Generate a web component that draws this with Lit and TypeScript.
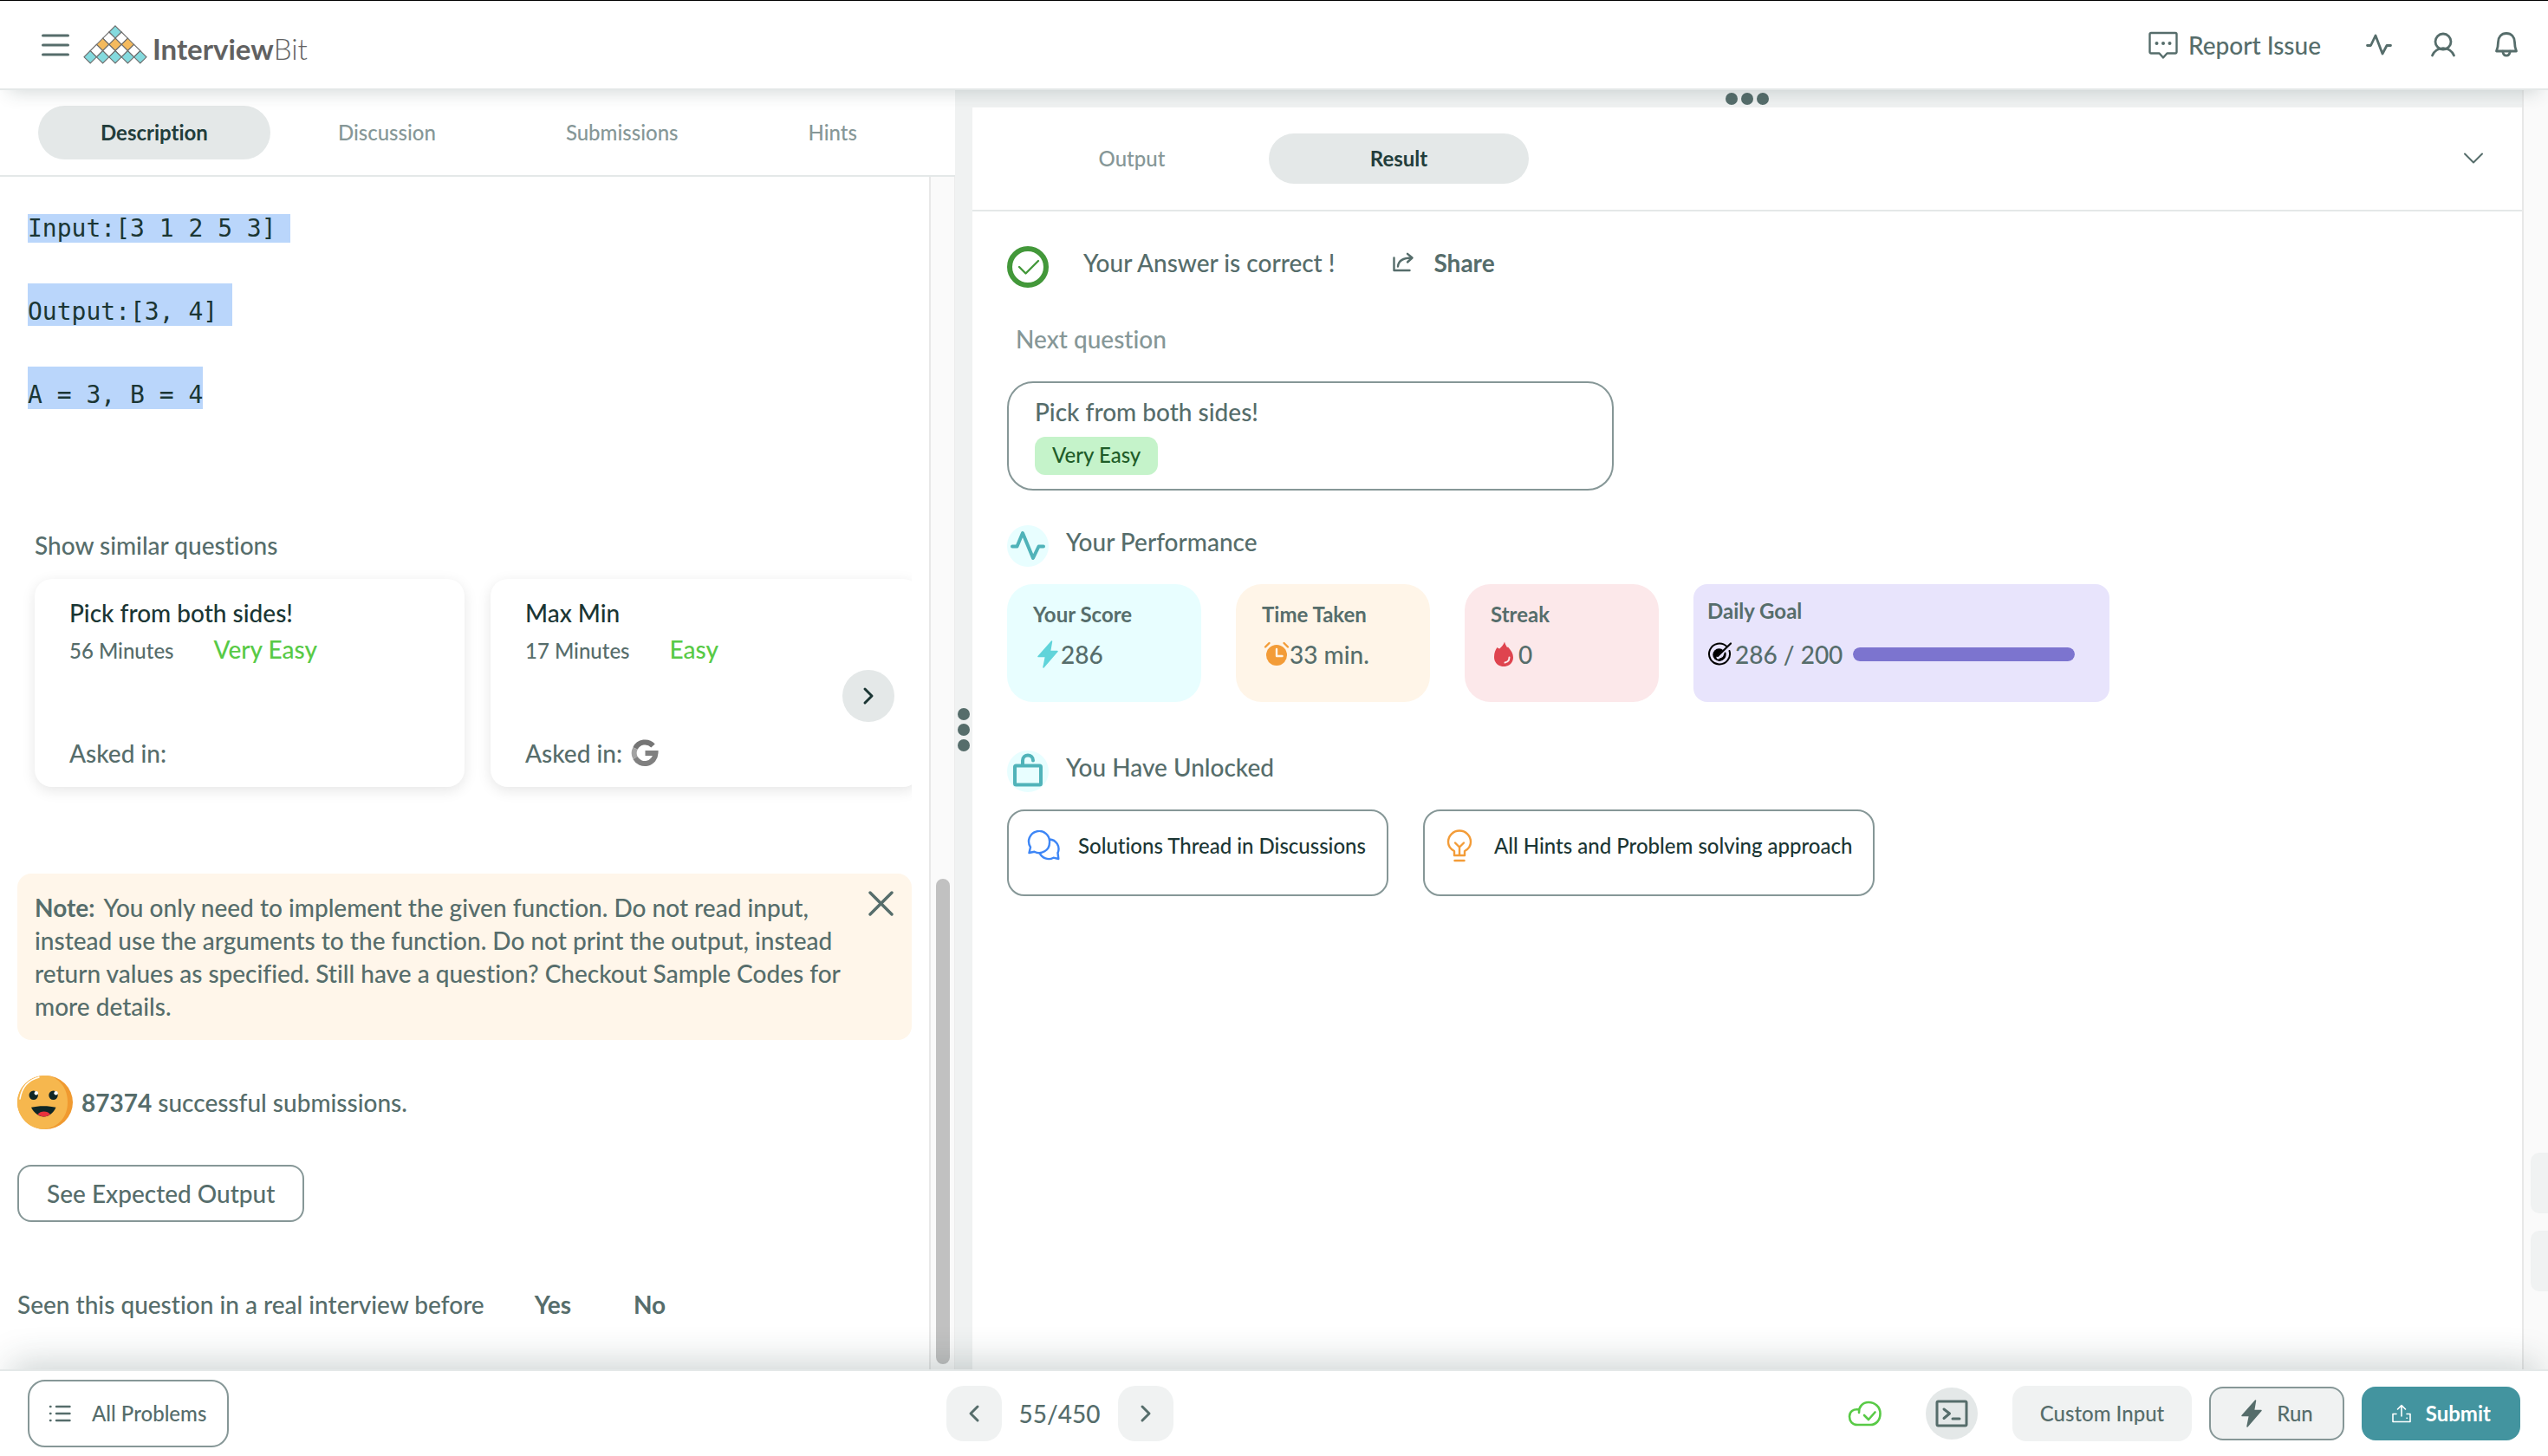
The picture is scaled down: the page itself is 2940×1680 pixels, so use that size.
import { LitElement, html, svg, css, nothing } from "lit";
import { customElement, property, state } from "lit/decorators.js";
import { classMap } from "lit/directives/class-map.js";
import { styleMap } from "lit/directives/style-map.js";

/* ---------- icons ---------- */

const line = (w: number, h: number, sw: number, body: unknown) => html`
  <svg width=${w} height=${h} viewBox="0 0 ${w} ${h}" fill="none" stroke="currentColor"
    stroke-width=${sw} stroke-linecap="round" stroke-linejoin="round" aria-hidden="true">${body}</svg>`;
const solid = (w: number, h: number, body: unknown) => html`
  <svg width=${w} height=${h} viewBox="0 0 ${w} ${h}" fill="currentColor" aria-hidden="true">${body}</svg>`;

const diamond = (cx: number, cy: number, fill: string) => svg`
  <path d="M${cx} ${cy - 7.2}l7.2 7.2-7.2 7.2-7.2-7.2z" fill=${fill} stroke="#6b6b6b" stroke-width="1.1" />`;

const logoRows = [
  { n: 1, fill: "#84dade" },
  { n: 2, fill: "#ffffff" },
  { n: 3, fill: "#f4ba5e" },
  { n: 4, fill: "#ffffff" },
  { n: 5, fill: "#84dade" },
];

const logoMark = html`
  <svg width="74" height="46" viewBox="0 0 74 46" aria-hidden="true">
    ${logoRows.map((row, r) =>
      Array.from({ length: row.n }, (_, i) =>
        diamond(37 + (i - (row.n - 1) / 2) * 14.4, 8 + r * 7.2, row.fill)))}
  </svg>`;

const icons = {
  menu: line(32, 28, 3, svg`<path d="M1.500 3h29M1.500 14h29M1.500 25h29" />`),
  report: line(34, 34, 2.400, svg`
    <path d="M3 3h28a1.500 1.500 0 0 1 1.500 1.500V25a1.500 1.500 0 0 1-1.500 1.500h-9.500L17 31.500l-4.500-5H3A1.500 1.500 0 0 1 1.500 25V4.500A1.500 1.500 0 0 1 3 3z" />
    <g fill="currentColor" stroke="none"><circle cx="9.500" cy="15" r="2" /><circle cx="17" cy="15" r="2" /><circle cx="24.500" cy="15" r="2" /></g>`),
  pulse: line(30, 28, 2.800, svg`<path d="M1.500 14.500h4L11 3l8 21 5-9.500h4.500" />`),
  user: line(30, 30, 2.800, svg`<circle cx="15" cy="11" r="9" /><path d="M2.500 27a13.500 13.500 0 0 1 25 0" />`),
  bell: line(28, 32, 2.800, svg`
    <path d="M14 2.500c-6 0-9.500 4.500-9.500 10 0 5-.8 7.500-2 10.500h23c-1.200-3-2-5.500-2-10.500 0-5.500-3.500-10-9.500-10z" />
    <path d="M9.800 23.200c.3 3.200 2 5 4.200 5s3.900-1.800 4.200-5" />`),
  chevronDown: line(24, 16, 2, svg`<path d="M2 2.500l10 10 10-10" />`),
  chevronRight: line(14, 22, 3, svg`<path d="M3 3l8 8-8 8" />`),
  chevronLeft: line(14, 22, 3, svg`<path d="M11 3l-8 8 8 8" />`),
  close: line(30, 30, 3.400, svg`<path d="M2 2l25 25M27 2L2 27" />`),
  share: line(26, 24, 2.400, svg`
    <path d="M2.500 6.500V21h18" /><path d="M7 16.500c.5-6 4.500-10 16-10" /><path d="M18 1.800l5.500 4.700-5.500 5" />`),
  check: html`
    <svg width="48" height="48" viewBox="0 0 48 48" fill="none" stroke="#43983a" stroke-linecap="round" stroke-linejoin="round" aria-hidden="true">
      <circle cx="24" cy="24" r="21" stroke-width="6" />
      <path d="M14 24l7.500 7.500L36 17" stroke-width="2.400" />
    </svg>`,
  perf: html`
    <svg width="48" height="48" viewBox="0 0 48 48" fill="none" stroke="#50b3b9" stroke-width="4" stroke-linecap="round" stroke-linejoin="round" aria-hidden="true">
      <circle cx="24" cy="24" r="24" fill="#e8feff" stroke="none" />
      <path d="M6 24.500h5.500L18 9l12 29 6.500-13.500H42" />
    </svg>`,
  unlock: html`
    <svg width="48" height="48" viewBox="0 0 48 48" fill="none" stroke="#50b3b9" stroke-width="4" stroke-linecap="round" stroke-linejoin="round" aria-hidden="true">
      <circle cx="24" cy="24" r="24" fill="#e8feff" stroke="none" />
      <rect x="9" y="17.500" width="30" height="22" rx="1.500" />
      <path d="M18 17v-5.500c0-8 12-8 12 0" />
    </svg>`,
  bolt: solid(26, 34, svg`<path d="M17.500 2L2 19.500h8.500L8 32l16-18.500h-8.500z" stroke="currentColor" stroke-width="1.500" stroke-linejoin="round" />`),
  clock: html`
    <svg width="30" height="30" viewBox="0 0 30 30" fill="none" stroke="#f39c38" stroke-linecap="round" stroke-linejoin="round" aria-hidden="true">
      <circle cx="15" cy="16" r="12" fill="#f39c38" stroke="none" />
      <path d="M2 6.500L6.500 2M28 6.500L23.500 2" stroke-width="2.400" />
      <path d="M15 9v8h6.500" stroke="#fff5e8" stroke-width="2.400" />
    </svg>`,
  flame: html`
    <svg width="26" height="30" viewBox="0 0 26 30" aria-hidden="true">
      <path d="M14 0.500c.5 2.500 2 4.500 3 6.500l1-.5c3.500 4 6 7.500 6 12C24 25 19 29 13 29S2 25 2 18c0-5 1.500-8 3.500-11 .8.600 1.800 1.500 2.800 1.500C10 7 13 4 14 .5z" fill="#df444f" />
      <path d="M19.500 18.500c0 3.500-2 5.500-5 6" fill="none" stroke="#fce8ea" stroke-width="2" stroke-linecap="round" />
    </svg>`,
  target: html`
    <svg width="28" height="28" viewBox="0 0 28 28" fill="none" stroke="#000" stroke-width="2" stroke-linecap="round" aria-hidden="true">
      <path d="M22.500 5a12 12 0 1 0 3 5" />
      <circle cx="13.500" cy="14.500" r="7.200" fill="#000" stroke="none" />
      <path d="M12.500 17.500L22 8" stroke="#e8e4fc" stroke-width="4" />
      <path d="M12 16L27 1.500" stroke-width="2.200" />
      <path d="M20.500 12.500c1 4.500-2.500 8.500-7 8.500" />
      <path d="M15 17.500c1.500 0 3-1.500 3-3" stroke="#e8e4fc" stroke-width="1.500" />
    </svg>`,
  chats: html`
    <svg width="40" height="36" viewBox="-1 0 40 36" fill="none" stroke="#3d86f6" stroke-width="2.400" stroke-linejoin="round" aria-hidden="true">
      <path d="M26 14a12 12 0 1 0-22 5.500L2.500 26l6-1.200A12 12 0 0 0 26 14z" />
      <path d="M26 10.500a11 11 0 0 1 9.500 15.500l.8 7-5.800-1.300A11.500 11.500 0 0 1 14.500 26" />
    </svg>`,
  bulb: html`
    <svg width="40" height="38" viewBox="-5 0 40 38" fill="none" stroke="#f39c38" stroke-width="2.400" stroke-linecap="round" stroke-linejoin="round" aria-hidden="true">
      <path d="M9 30v-5C4.500 22.500 2 19 2 14.500a13 13 0 0 1 26 0c0 4.500-2.500 8-7 10.500v5z" />
      <path d="M10 15.500l5 5 5-5M15 20.500V29M9.500 36h11" />
    </svg>`,
  list: line(26, 22, 2.400, svg`<path d="M9 3h15.500M9 11h15.500M9 19h15.500M2 3h.5M2 11h.5M2 19h.5" />`),
  cloud: line(40, 30, 2.600, svg`
    <path d="M13 14c-.5-6.500 4-12 11-12s13.500 5 13.500 13S32.500 28 26 28H11C5.500 28 2 24 2 18.500S6 9.500 13 10.500" />
    <path d="M19 17l5 5 7.500-8.500" />`),
  terminal: line(38, 32, 3, svg`
    <rect x="2" y="2" width="34" height="28" rx="1.500" />
    <path d="M10 11l6.500 5-6.500 5.500M20 22h8" />`),
  upload: line(24, 22, 1.600, svg`
    <path d="M12 14V2M7.500 6L12 1.500 16.500 6M6 11.500H2V20.500h20V11.500h-4M18 16.200h.4" />`),
  google: html`
    <svg width="32" height="32" viewBox="0 0 32 32" fill="none" stroke="#757575" stroke-width="6" aria-hidden="true">
      <path d="M25.500 7.500A12.500 12.500 0 0 0 5 10.500" />
      <path d="M5 10.500a12.500 12.500 0 0 0 0 11" stroke="#a3a3a3" />
      <path d="M5 21.500A12.500 12.500 0 0 0 28.500 16H16.500" stroke="#808080" />
    </svg>`,
  smile: html`
    <svg width="64" height="64" viewBox="0 0 64 64" aria-hidden="true">
      <ellipse cx="32" cy="32" rx="32" ry="31" fill="#f09a30" />
      <path d="M32 1C14 1 0 15 0 32s14 31 31 31c16-2 27-14 27-31S48 3 34 1z" fill="#f6b74e" />
      <path d="M3 28C5 15 13 6 25 3" fill="none" stroke="#fff" stroke-width="1.500" stroke-linecap="round" />
      <circle cx="18.700" cy="23.700" r="5.200" fill="#0f2626" />
      <circle cx="41.500" cy="23.700" r="5.200" fill="#0f2626" />
      <circle cx="21.800" cy="21.300" r="2.200" fill="#fff" />
      <circle cx="44.600" cy="21.300" r="2.200" fill="#fff" />
      <path d="M16 37.800c8-2.200 20.500-2.200 28.500 0C41.500 44.500 36.500 48.500 30.500 48.500S19.500 44.500 16 37.800z" fill="#0f2626" />
      <path d="M23.500 45.800c3-4.500 11.500-4.500 14.500 0-4.500 3.500-10 3.500-14.500 0z" fill="#e8323c" />
    </svg>`,
};

/* ---------- data ---------- */

const exampleLines = ["Input:[3 1 2 5 3] ", "Output:[3, 4] ", "A = 3, B = 4"];

const similar = [
  { title: "Pick from both sides!", time: "56 Minutes", level: "Very Easy", google: false },
  { title: "Max Min", time: "17 Minutes", level: "Easy", google: true },
];

/* ---------- shared styles ---------- */

const base = css`
  *, *::before, *::after { box-sizing: border-box; }
  button {
    font: inherit;
    color: inherit;
    background: none;
    border: 0;
    padding: 0;
    margin: 0;
    display: inline-flex;
    align-items: center;
    justify-content: center;
    cursor: pointer;
    white-space: nowrap;
  }
  a { color: inherit; text-decoration: none; }
  svg { display: block; flex: none; }
  h2, h3, p, pre { margin: 0; font: inherit; }
`;

/* ---------- tabs ---------- */

@customElement("pane-tabs")
class PaneTabs extends LitElement {
  @property({ type: Array }) tabs: string[] = [];
  @property({ type: Number }) selected = 0;
  @property({ type: Boolean, reflect: true }) wide = false;

  static styles = [base, css`
    :host { display: flex; }
    .tabs { display: flex; gap: 6px; }
    .tab {
      height: 62px;
      padding: 0 72px;
      border-radius: 31px;
      font-size: 24px;
      color: #869797;
    }
    .active { background: #e4e8e8; color: #223d3b; font-weight: 700; }
    :host([wide]) .tabs { gap: 8px; }
    :host([wide]) .tab { width: 300px; height: 58px; padding: 0; }
  `];

  render() {
    return html`<div class="tabs" role="tablist">
      ${this.tabs.map((t, i) => html`
        <button role="tab" class=${classMap({ tab: true, active: i === this.selected })}
          aria-selected=${i === this.selected} @click=${() => (this.selected = i)}>${t}</button>`)}
    </div>`;
  }
}

/* ---------- problem pane ---------- */

@customElement("problem-pane")
class ProblemPane extends LitElement {
  @state() private noteOpen = true;

  static styles = [base, css`
    :host { display: flex; flex-direction: column; min-width: 0; min-height: 0; background: #fff; }
    .bar { padding: 18px 44px; border-bottom: 2px solid #e4e8e8; }
    .body { display: flex; flex: 1; min-height: 0; }
    .content { flex: 1; min-width: 0; overflow: hidden; padding: 36px 20px 0; }
    .scroll {
      flex: 0 0 30px;
      display: flex;
      flex-direction: column;
      align-items: center;
      background: #fafafa;
      border-left: 2px solid #e8e8e8;
      border-right: 1px solid #ececec;
    }
    .before { flex: 810; }
    .thumb { flex: 560; width: 16px; border-radius: 8px; background: #c1c1c1; }
    .after { flex: 6; }
    .example {
      padding: 0 12px;
      font-family: "DejaVu Sans Mono", monospace;
      font-size: 28px;
      line-height: 48px;
      color: #1b3634;
    }
    .example mark { background: #bad6fb; color: inherit; }
    .example .tall { padding-top: 16px; }
    .heading { padding: 0 20px; margin-top: 130px; }
    .carousel { position: relative; margin-top: 20px; }
    .track { display: flex; gap: 30px; padding-left: 20px; overflow-x: clip; }
    .card {
      flex: 0 0 496px;
      height: 240px;
      padding: 20px 40px;
      border-radius: 20px;
      background: #fff;
      box-shadow: 0 4px 16px rgba(0, 0, 0, 0.1);
      display: flex;
      flex-direction: column;
    }
    .title { color: #1b3634; }
    .meta { display: flex; align-items: baseline; gap: 46px; margin-top: 4px; }
    .time { font-size: 24px; }
    .level { color: #58ca46; }
    .asked { display: flex; align-items: center; gap: 10px; margin-top: auto; }
    .next {
      position: absolute;
      right: 20px;
      top: 105px;
      width: 60px;
      height: 60px;
      border-radius: 50%;
      background: #e4e8e8;
      color: #1b3634;
    }
    .note {
      display: flex;
      justify-content: space-between;
      align-items: flex-start;
      gap: 24px;
      margin-top: 100px;
      padding: 20px;
      border-radius: 16px;
      background: #fff6ea;
    }
    .lead { font-weight: 700; margin-right: 4px; }
    .solved { display: flex; align-items: center; gap: 10px; margin-top: 40px; }
    .expected {
      height: 66px;
      margin-top: 40px;
      padding: 0 32px;
      border: 2px solid #869797;
      border-radius: 16px;
    }
    .seen { display: flex; gap: 58px; margin-top: 76px; }
    .answers { display: flex; gap: 72px; font-weight: 700; }
  `];

  render() {
    return html`
      <div class="bar"><pane-tabs .tabs=${["Description", "Discussion", "Submissions", "Hints"]}></pane-tabs></div>
      <div class="body">
        <div class="content">
          <pre class="example">${exampleLines.map((l, i) => html`${i ? "\n\n" : ""}<mark class=${i ? "tall" : "first"}>${l}</mark>`)}</pre>
          <h3 class="heading">Show similar questions</h3>
          <div class="carousel">
            <div class="track">
              ${similar.map(q => html`
                <article class="card">
                  <a class="title" href="#">${q.title}</a>
                  <div class="meta"><span class="time">${q.time}</span><span class="level">${q.level}</span></div>
                  <div class="asked">Asked in: ${q.google ? icons.google : nothing}</div>
                </article>`)}
            </div>
            <button class="next" aria-label="Next questions">${icons.chevronRight}</button>
          </div>
          ${this.noteOpen ? html`
            <div class="note">
              <p><b class="lead">Note:</b> You only need to implement the given function. Do not read input, instead use the arguments to the function. Do not print the output, instead return values as specified. Still have a question? Checkout Sample Codes for more details.</p>
              <button aria-label="Close note" @click=${() => (this.noteOpen = false)}>${icons.close}</button>
            </div>` : nothing}
          <div class="solved">${icons.smile}<span><b>87374</b> successful submissions.</span></div>
          <button class="expected">See Expected Output</button>
          <div class="seen">
            <span>Seen this question in a real interview before</span>
            <div class="answers"><button>Yes</button><button>No</button></div>
          </div>
        </div>
        <div class="scroll"><div class="before"></div><div class="thumb"></div><div class="after"></div></div>
      </div>`;
  }
}

/* ---------- result pane ---------- */

@customElement("result-pane")
class ResultPane extends LitElement {
  static styles = [base, css`
    :host { display: block; min-width: 0; min-height: 0; overflow: hidden; background: #fff; }
    .bar {
      display: flex;
      align-items: center;
      justify-content: space-between;
      padding: 30px 44px 30px 34px;
      border-bottom: 2px solid #e4e8e8;
    }
    .content { padding: 40px; }
    .row { display: flex; align-items: flex-start; }
    .status { gap: 40px; }
    .share { gap: 22px; font-weight: 700; margin-left: 26px; height: 38px; }
    .upnext { padding: 0 10px; margin-top: 40px; color: #869797; }
    .question {
      width: 700px;
      max-width: 100%;
      margin-top: 30px;
      padding: 14px 30px 16px;
      border: 2px solid #869797;
      border-radius: 30px;
      display: flex;
      flex-direction: column;
      align-items: flex-start;
      gap: 10px;
    }
    .tag {
      height: 44px;
      line-height: 42px;
      padding: 0 20px;
      border-radius: 12px;
      background: #c5f3ca;
      color: #1f5c28;
      font-size: 24px;
    }
    .section { gap: 20px; margin-top: 40px; }
    .later { margin-top: 56px; }
    .stats { gap: 40px; margin-top: 20px; flex-wrap: wrap; }
    .stat { width: 224px; height: 136px; padding: 20px 30px; border-radius: 30px; }
    .label { display: block; font-size: 24px; line-height: 30px; font-weight: 700; }
    .value { display: flex; align-items: center; height: 38px; margin-top: 12px; }
    .score { background: #e8feff; }
    .score .value { color: #60d4da; }
    .value span { color: #566d6b; }
    .score .value svg { margin-left: 4px; margin-right: 2px; }
    .time { background: #fff5e8; }
    .streak { background: #fce8ea; }
    .streak .value svg { margin-left: 2px; margin-right: 4px; }
    .time .value svg { margin-left: 2px; }
    .goal { width: 480px; padding: 16px; border-radius: 16px; background: #e8e4fc; }
    .goal .value { margin-top: 16px; gap: 4px; }
    .meter { width: 256px; height: 16px; margin-left: 8px; border-radius: 8px; overflow: hidden; background: #cfc9f4; }
    .fill { height: 100%; border-radius: 8px; background: #7c74cf; }
    .unlocks { gap: 40px; margin-top: 20px; flex-wrap: wrap; }
    .unlock {
      height: 100px;
      padding: 0 24px 16px 20px;
      border: 2px solid #869797;
      border-radius: 20px;
      gap: 20px;
      font-size: 24px;
      color: #1b3634;
    }
  `];

  render() {
    const goal = { done: 286, target: 200 };
    const pct = Math.min(100, (goal.done / goal.target) * 100);
    return html`
      <div class="bar">
        <pane-tabs wide .selected=${1} .tabs=${["Output", "Result"]}></pane-tabs>
        <button aria-label="Collapse panel">${icons.chevronDown}</button>
      </div>
      <div class="content">
        <div class="row status">${icons.check}<span>Your Answer is correct !</span>
          <button class="share">${icons.share}Share</button></div>
        <p class="upnext">Next question</p>
        <a class="question" href="#"><span>Pick from both sides!</span><span class="tag">Very Easy</span></a>
        <h2 class="row section">${icons.perf}<span>Your Performance</span></h2>
        <div class="row stats">
          <div class="stat score"><span class="label">Your Score</span><div class="value">${icons.bolt}<span>286</span></div></div>
          <div class="stat time"><span class="label">Time Taken</span><div class="value">${icons.clock}<span>33 min.</span></div></div>
          <div class="stat streak"><span class="label">Streak</span><div class="value">${icons.flame}<span>0</span></div></div>
          <div class="stat goal"><span class="label">Daily Goal</span>
            <div class="value">${icons.target}<span>${goal.done} / ${goal.target}</span>
              <div class="meter" role="progressbar" aria-label="Daily Goal" aria-valuenow=${pct}>
                <div class="fill" style=${styleMap({ width: `${pct}%` })}></div>
              </div>
            </div>
          </div>
        </div>
        <h2 class="row section later">${icons.unlock}<span>You Have Unlocked</span></h2>
        <div class="row unlocks">
          <button class="unlock">${icons.chats}<span>Solutions Thread in Discussions</span></button>
          <button class="unlock">${icons.bulb}<span>All Hints and Problem solving approach</span></button>
        </div>
      </div>`;
  }
}

/* ---------- page ---------- */

@customElement("app-root")
class AppRoot extends LitElement {
  static styles = [base, css`
    :host {
      display: grid;
      grid-template-rows: auto minmax(0, 1fr) auto;
      height: 100vh;
      overflow: hidden;
      background: #fff;
      color: #566d6b;
      font-family: Lato, "Liberation Sans", sans-serif;
      font-size: 28px;
      font-weight: 500;
      font-variant-ligatures: none;
      line-height: 38px;
    }
    .header {
      position: relative;
      display: flex;
      align-items: center;
      justify-content: space-between;
      height: 104px;
      padding: 0 34px 0 48px;
      border-top: 1px solid #000;
      border-bottom: 2px solid #e4e8e8;
      background: #fff;
      box-shadow: 0 12px 20px -10px rgba(34, 61, 59, 0.2);
    }
    .brand { display: flex; align-items: center; gap: 16px; }
    .logo { display: flex; align-items: flex-end; gap: 6px; }
    .name { font-size: 33px; line-height: 38px; font-weight: 700; color: #616161; }
    .thin { font-weight: 300; }
    .tools { display: flex; align-items: center; gap: 44px; }
    .report { gap: 12px; margin-right: 8px; }
    .main {
      display: grid;
      grid-template-columns: minmax(0, 1102fr) 20px minmax(0, 1788fr) 30px;
      min-height: 0;
    }
    .gutter { display: flex; flex-direction: column; align-items: center; justify-content: center; gap: 4px; background: #f0f2f2; }
    .dot { width: 14px; height: 14px; border-radius: 50%; background: #566d6b; }
    .right { display: grid; grid-template-rows: 20px minmax(0, 1fr); min-height: 0; }
    .grip { display: flex; align-items: center; justify-content: center; gap: 4px; background: #f0f2f2; }
    .edge {
      display: flex;
      flex-direction: column;
      align-items: flex-end;
      justify-content: flex-end;
      gap: 20px;
      padding-bottom: 90px;
      background: #fafafa;
      border-left: 2px solid #e8e8e8;
    }
    .flap { width: 20px; height: 70px; border-radius: 10px 0 0 10px; background: #f0f2f2; }
    .back { z-index: 0; }
    .front { z-index: 1; }
    .footer {
      position: relative;
      display: grid;
      grid-template-columns: minmax(0, 1060fr) auto minmax(0, 1555fr);
      align-items: center;
      height: 100px;
      padding: 0 32px;
      border-top: 2px solid #e4e8e8;
      background: #fff;
      box-shadow: 0 -20px 40px -12px rgba(34, 61, 59, 0.22);
    }
    .all {
      justify-self: start;
      height: 78px;
      padding: 0 24px 0 22px;
      gap: 24px;
      border: 2px solid #869797;
      border-radius: 20px;
      font-size: 24px;
    }
    .pager { display: flex; align-items: center; gap: 20px; }
    .step { width: 64px; height: 64px; border-radius: 20px; background: #f0f2f2; }
    .actions { display: flex; align-items: center; justify-content: flex-end; gap: 20px; font-size: 24px; }
    .saved { display: flex; color: #58ca46; margin-right: 30px; }
    .console { width: 60px; height: 60px; margin-right: 20px; border-radius: 50%; background: #e4e8e8; }
    .custom { height: 64px; padding: 0 32px; border-radius: 16px; background: #f0f2f2; }
    .run { height: 62px; padding: 0 34px; gap: 16px; border: 2px solid #869797; border-radius: 16px; background: #f0f2f2; }
    .submit { height: 62px; padding: 0 34px; gap: 16px; border-radius: 16px; background: #43949f; color: #fff; font-weight: 700; }
  `];

  render() {
    return html`
      <header class="header front">
        <div class="brand">
          <button aria-label="Menu">${icons.menu}</button>
          <a class="logo" href="#">${logoMark}<span class="name">Interview<span class="thin">Bit</span></span></a>
        </div>
        <div class="tools">
          <button class="report">${icons.report}Report Issue</button>
          <button aria-label="Activity">${icons.pulse}</button>
          <button aria-label="Profile">${icons.user}</button>
          <button aria-label="Notifications">${icons.bell}</button>
        </div>
      </header>
      <main class="main back">
        <problem-pane></problem-pane>
        <div class="gutter"><i class="dot"></i><i class="dot"></i><i class="dot"></i></div>
        <div class="right">
          <div class="grip"><i class="dot"></i><i class="dot"></i><i class="dot"></i></div>
          <result-pane></result-pane>
        </div>
        <div class="edge"><i class="flap"></i><i class="flap"></i></div>
      </main>
      <footer class="footer front">
        <button class="all">${icons.list}All Problems</button>
        <div class="pager">
          <button class="step" aria-label="Previous problem">${icons.chevronLeft}</button>
          <span>55/450</span>
          <button class="step" aria-label="Next problem">${icons.chevronRight}</button>
        </div>
        <div class="actions">
          <span class="saved">${icons.cloud}</span>
          <button class="console" aria-label="Console">${icons.terminal}</button>
          <button class="custom">Custom Input</button>
          <button class="run">${icons.bolt}Run</button>
          <button class="submit">${icons.upload}Submit</button>
        </div>
      </footer>`;
  }
}
